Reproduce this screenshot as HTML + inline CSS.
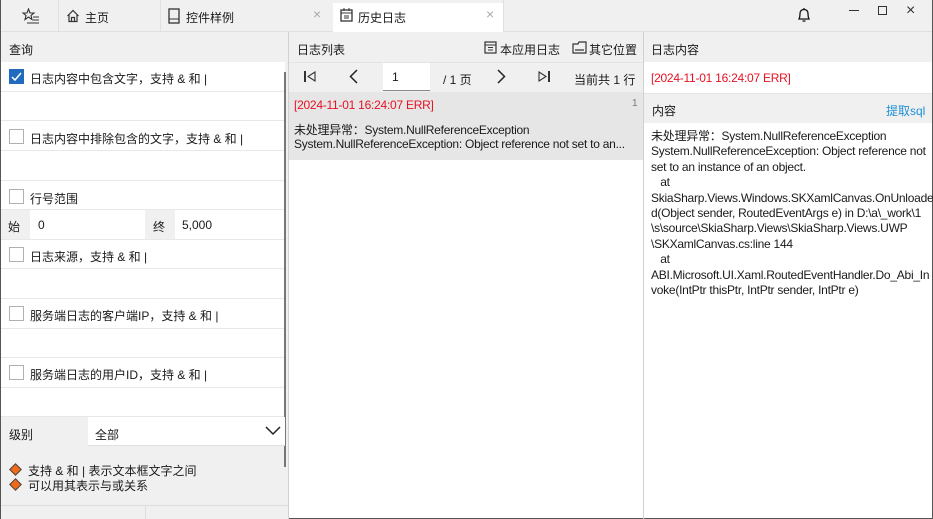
<!DOCTYPE html><html><head><meta charset="utf-8"><style>
*{box-sizing:border-box;margin:0;padding:0}
body{width:933px;height:519px;overflow:hidden;font-family:"Liberation Sans","Noto Sans CJK SC",sans-serif;font-size:12px;color:#1a1a1a;background:#fff;position:relative}
.a{position:absolute}
.win{position:absolute;left:0;top:0;width:933px;height:519px;border:1px solid #555;border-top:none}
.g{background:#f0f0f0}
.row{position:absolute;left:1px;width:284px;border-bottom:1px solid #e8e8e8;background:#fff}
.cb{position:absolute;left:8px;width:15px;height:15px;border:1px solid #b0b0b0;background:#fff}
.lbl{position:absolute;left:29px}
.t{white-space:nowrap;letter-spacing:-0.25px}
</style></head><body>
<div class="win"></div>
<div class="a g" style="left:1px;top:0;width:931px;height:32px;border-bottom:1px solid #e0e0e0"></div>
<div class="a" style="left:58px;top:0;width:1px;height:32px;background:#e0e0e0"></div>
<div class="a" style="left:160px;top:0;width:1px;height:32px;background:#e0e0e0"></div>
<div class="a" style="left:333px;top:3px;width:171px;height:30px;background:#fff"></div>
<div class="a" style="left:503px;top:0;width:1px;height:32px;background:#e0e0e0"></div>
<svg class="a" style="left:22px;top:8px" width="18" height="16"><path d="M6.5 1 L8 5 L12 5 L9 7.5 L10 11.5 L6.5 9 L3 11.5 L4 7.5 L1 5 L5 5Z" fill="none" stroke="#333" stroke-width="1.1"/><path d="M11 9H17M11 12H17M5 15H17" stroke="#333" stroke-width="1.1"/></svg>
<svg class="a" style="left:66px;top:9px" width="14" height="14" viewBox="0 0 14 14"><path d="M1.5 7 L7 1.5 L12.5 7 M3 5.5 V12.5 H11 V5.5 M5.5 12.5 V8.5 H8.5 V12.5" fill="none" stroke="#333" stroke-width="1.2"/></svg>
<div class="a" style="left:85px;top:9px">主页</div>
<svg class="a" style="left:168px;top:8px" width="12" height="16"><rect x="1" y="1" width="10" height="14" fill="none" stroke="#333" stroke-width="1.3"/><path d="M1 11H11" stroke="#333"/></svg>
<div class="a" style="left:186px;top:9px">控件样例</div>
<div class="a" style="left:313px;top:6px;color:#aaa;font-size:14px">×</div>
<svg class="a" style="left:340px;top:8px" width="13" height="14"><rect x="1" y="2" width="11" height="11" fill="none" stroke="#333" stroke-width="1.3"/><path d="M1 5H12M4 0V3M9 0V3M4 8H9M4 10H9" stroke="#333"/></svg>
<div class="a" style="left:358px;top:9px">历史日志</div>
<div class="a" style="left:486px;top:6px;color:#aaa;font-size:14px">×</div>
<svg class="a" style="left:797px;top:7px" width="14" height="17"><path d="M2 12 Q3 10 3 7 Q3 2.5 7 2.5 Q11 2.5 11 7 Q11 10 12 12Z M5.5 14h3M7 1v1.5" fill="none" stroke="#111" stroke-width="1.3"/></svg>
<div class="a" style="left:849px;top:10px;width:10px;height:1px;background:#333"></div>
<div class="a" style="left:878px;top:6px;width:9px;height:9px;border:1px solid #333"></div>
<div class="a" style="left:906px;top:2px;font-size:16px;color:#333">×</div>

<div class="a g" style="left:1px;top:32px;width:288px;height:487px"></div>
<div class="a" style="left:288px;top:32px;width:1px;height:487px;background:#d0d0d0"></div>
<div class="a" style="left:9px;top:41px">查询</div>
<div class="row" style="top:62px;height:30px"><div class="cb" style="top:7px;background:#1f6cbf;border-color:#1f6cbf"><svg width="13" height="13" style="position:absolute;left:0;top:0"><path d="M2 7 L5 10 L11 3" stroke="#fff" stroke-width="1.5" fill="none"/></svg></div><div class="lbl" style="top:8px">日志内容中包含文字，支持 &amp; 和 |</div></div>
<div class="row" style="top:92px;height:29px"></div>
<div class="row" style="top:121px;height:30px"><div class="cb" style="top:8px"></div><div class="lbl" style="top:9px">日志内容中排除包含的文字，支持 &amp; 和 |</div></div>
<div class="row" style="top:151px;height:30px"></div>
<div class="row" style="top:181px;height:29px"><div class="cb" style="top:8px"></div><div class="lbl" style="top:9px">行号范围</div></div>
<div class="row" style="top:210px;height:30px"><div class="a g" style="left:0;top:0;width:29px;height:29px"></div><div class="a" style="left:7px;top:8px">始</div><div class="a" style="left:37px;top:8px">0</div><div class="a g" style="left:144px;top:0;width:30px;height:29px"></div><div class="a" style="left:152px;top:8px">终</div><div class="a" style="left:181px;top:8px">5,000</div></div>
<div class="row" style="top:240px;height:29px"><div class="cb" style="top:7px"></div><div class="lbl" style="top:8px">日志来源，支持 &amp; 和 |</div></div>
<div class="row" style="top:269px;height:30px"></div>
<div class="row" style="top:299px;height:30px"><div class="cb" style="top:7px"></div><div class="lbl" style="top:8px">服务端日志的客户端IP，支持 &amp; 和 |</div></div>
<div class="row" style="top:329px;height:29px"></div>
<div class="row" style="top:358px;height:30px"><div class="cb" style="top:7px"></div><div class="lbl" style="top:8px">服务端日志的用户ID，支持 &amp; 和 |</div></div>
<div class="row" style="top:388px;height:29px"></div>
<div class="a" style="left:284px;top:72px;width:2px;height:395px;background:#777"></div>
<div class="a" style="left:9px;top:426px">级别</div>
<div class="a" style="left:88px;top:417px;width:197px;height:29px;background:#fff;border-bottom:1px solid #e0e0e0"></div>
<div class="a" style="left:95px;top:426px">全部</div>
<svg class="a" style="left:265px;top:426px" width="16" height="10"><path d="M1 1 L8 8 L15 1" stroke="#222" stroke-width="1.5" fill="none"/></svg>
<div class="a" style="left:11px;top:465px;width:9px;height:9px;background:#f06a1a;border:1px solid #444;transform:rotate(45deg)"></div>
<div class="a" style="left:28px;top:462px">支持 &amp; 和 | 表示文本框文字之间</div>
<div class="a" style="left:11px;top:480px;width:9px;height:9px;background:#f06a1a;border:1px solid #444;transform:rotate(45deg)"></div>
<div class="a" style="left:28px;top:477px">可以用其表示与或关系</div>
<div class="a" style="left:1px;top:505px;width:287px;height:1px;background:#ddd"></div>
<div class="a" style="left:145px;top:505px;width:1px;height:14px;background:#ddd"></div>

<div class="a g" style="left:289px;top:32px;width:354px;height:60px"></div>
<div class="a" style="left:643px;top:32px;width:1px;height:487px;background:#d0d0d0"></div>
<div class="a" style="left:297px;top:41px">日志列表</div>
<svg class="a" style="left:484px;top:41px" width="13" height="13"><rect x="1" y="1" width="11" height="11" fill="none" stroke="#333" stroke-width="1.2"/><path d="M1 4H12M4 6.5H9M4 9H9" stroke="#333"/></svg>
<div class="a" style="left:500px;top:41px">本应用日志</div>
<svg class="a" style="left:572px;top:41px" width="15" height="13"><path d="M1 3H6L7 1H14V12H1Z M3 9H12" fill="none" stroke="#333" stroke-width="1.2"/></svg>
<div class="a" style="left:589px;top:41px">其它位置</div>
<div class="a" style="left:289px;top:62px;width:354px;height:1px;background:#e4e4e4"></div>
<div class="a" style="left:304px;top:71px;width:1.5px;height:11px;background:#333"></div>
<svg class="a" style="left:307px;top:71px" width="9" height="11"><path d="M8 1 L1 5.5 L8 10Z" fill="none" stroke="#333" stroke-width="1.1"/></svg>
<svg class="a" style="left:349px;top:69px" width="9" height="15"><path d="M8 1 L1.5 7.5 L8 14" fill="none" stroke="#222" stroke-width="1.5"/></svg>
<div class="a" style="left:383px;top:63px;width:47px;height:28px;background:#fff;border-bottom:1px solid #888"></div>
<div class="a" style="left:392px;top:70px">1</div>
<div class="a" style="left:443px;top:71px">/ 1 页</div>
<svg class="a" style="left:497px;top:69px" width="9" height="15"><path d="M1 1 L7.5 7.5 L1 14" fill="none" stroke="#222" stroke-width="1.5"/></svg>
<svg class="a" style="left:538px;top:71px" width="9" height="11"><path d="M1 1 L8 5.5 L1 10Z" fill="none" stroke="#333" stroke-width="1.1"/></svg>
<div class="a" style="left:548px;top:71px;width:1.5px;height:11px;background:#333"></div>
<div class="a" style="left:574px;top:71px">当前共 1 行</div>
<div class="a" style="left:289px;top:92px;width:354px;height:68px;background:#e6e6e6"></div>
<div class="a t" style="left:294px;top:98px;color:#e81123">[2024-11-01 16:24:07 ERR]</div>
<div class="a" style="left:632px;top:98px;color:#777;font-size:10px">1</div>
<div class="a t" style="left:294px;top:121px">未处理异常：System.NullReferenceException</div>
<div class="a t" style="left:294px;top:137px">System.NullReferenceException: Object reference not set to an...</div>

<div class="a g" style="left:644px;top:32px;width:288px;height:30px"></div>
<div class="a" style="left:651px;top:41px">日志内容</div>
<div class="a t" style="left:651px;top:71px;color:#e81123">[2024-11-01 16:24:07 ERR]</div>
<div class="a g" style="left:644px;top:93px;width:288px;height:30px;border-top:1px solid #e4e4e4"></div>
<div class="a" style="left:652px;top:102px">内容</div>
<div class="a" style="left:886px;top:102px;color:#1e90d8">提取sql</div>
<div class="a t" style="left:651px;top:129px;line-height:15.4px">未处理异常：System.NullReferenceException<br>System.NullReferenceException: Object reference not<br>set to an instance of an object.<br>&nbsp;&nbsp;&nbsp;at<br>SkiaSharp.Views.Windows.SKXamlCanvas.OnUnloade<br>d(Object sender, RoutedEventArgs e) in D:\a\_work\1<br>\s\source\SkiaSharp.Views\SkiaSharp.Views.UWP<br>\SKXamlCanvas.cs:line 144<br>&nbsp;&nbsp;&nbsp;at<br>ABI.Microsoft.UI.Xaml.RoutedEventHandler.Do_Abi_In<br>voke(IntPtr thisPtr, IntPtr sender, IntPtr e)</div>
</body></html>
